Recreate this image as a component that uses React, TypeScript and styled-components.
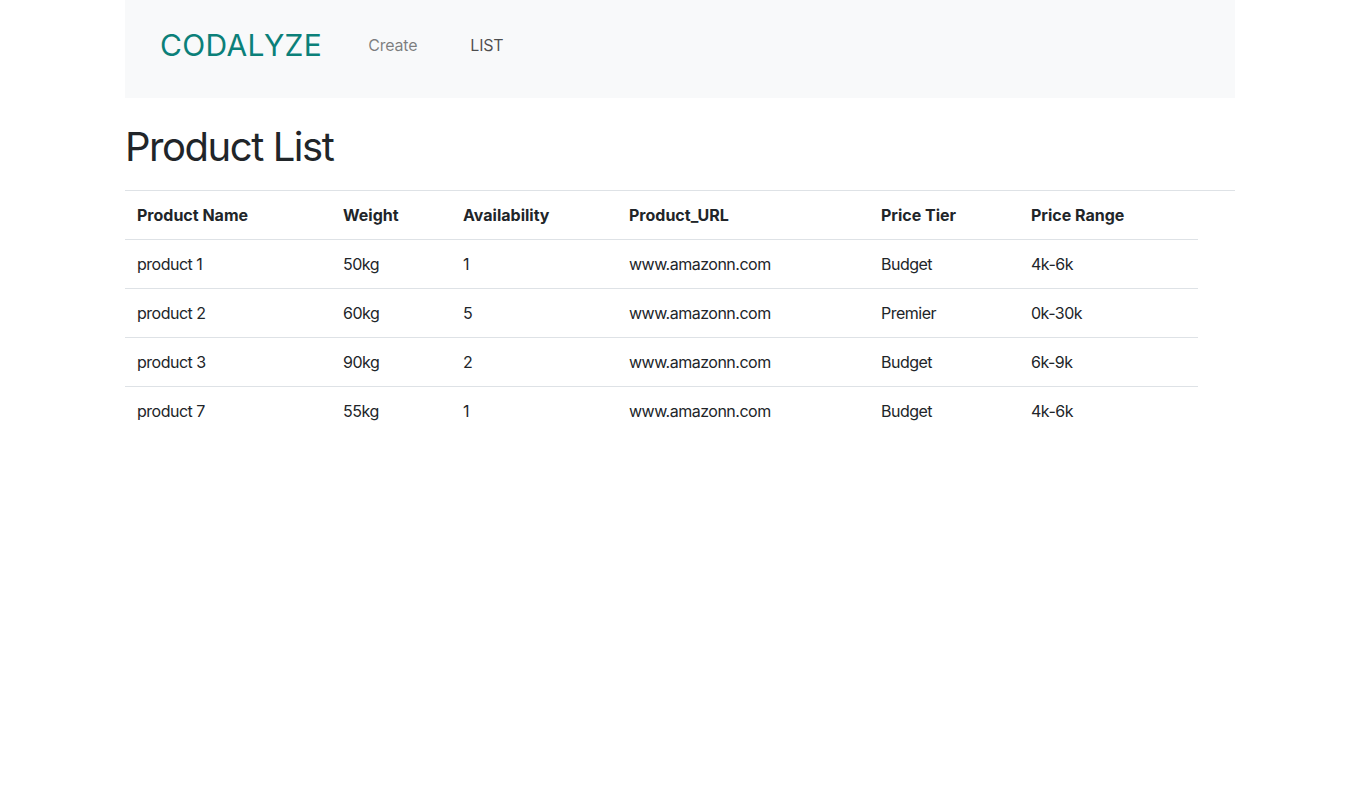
import React from 'react'
import styled, { createGlobalStyle } from 'styled-components'

const GlobalStyle = createGlobalStyle`
  * { box-sizing: border-box; }
  body {
    margin: 0;
    font-family: Inter, "Noto Sans", "Liberation Sans", sans-serif;
    font-size: 16px;
    line-height: 1.5;
    color: #212529;
    background: #fff;
  }
`

const products = [
  { name: 'product 1', weight: '50kg', availability: 1, url: 'www.amazonn.com', tier: 'Budget', range: '4k-6k' },
  { name: 'product 2', weight: '60kg', availability: 5, url: 'www.amazonn.com', tier: 'Premier', range: '0k-30k' },
  { name: 'product 3', weight: '90kg', availability: 2, url: 'www.amazonn.com', tier: 'Budget', range: '6k-9k' },
  { name: 'product 7', weight: '55kg', availability: 1, url: 'www.amazonn.com', tier: 'Budget', range: '4k-6k' },
]

const columns = [
  { label: 'Product Name', width: 206 },
  { label: 'Weight', width: 120 },
  { label: 'Availability', width: 166 },
  { label: 'Product_URL', width: 252 },
  { label: 'Price Tier', width: 150 },
  { label: 'Price Range', width: 179 },
]

const App: React.FC = () => {
  return (
    <>
      <GlobalStyle />
      <Container>
        <Navbar>
          <Brand href="#">CODALYZE</Brand>
          <NavLinks>
            <NavLink href="#">Create</NavLink>
            <NavLink href="#" $active>
              LIST
            </NavLink>
          </NavLinks>
        </Navbar>

        <Title>Product List</Title>

        <TableWrap>
          <Table>
            <colgroup>
              {columns.map((c) => (
                <col key={c.label} style={{ width: c.width }} />
              ))}
            </colgroup>
            <thead>
              <tr>
                {columns.map((c) => (
                  <Th key={c.label}>{c.label}</Th>
                ))}
              </tr>
            </thead>
            <tbody>
              {products.map((p) => (
                <tr key={p.name}>
                  <Td>{p.name}</Td>
                  <Td>{p.weight}</Td>
                  <Td>{p.availability}</Td>
                  <Td>{p.url}</Td>
                  <Td>{p.tier}</Td>
                  <Td>{p.range}</Td>
                </tr>
              ))}
            </tbody>
          </Table>
        </TableWrap>
      </Container>
    </>
  )
}

export default App

const Container = styled.div`
  width: 1110px;
  margin-left: calc(50% - 554px);
`

const Navbar = styled.nav`
  display: flex;
  align-items: center;
  height: 98px;
  padding: 0 35px 8px;
  background-color: #f8f9fa;
`

const Brand = styled.a`
  font-size: 30px;
  line-height: 1.2;
  color: #0b8079;
  text-decoration: none;
  margin-right: 46px;
  letter-spacing: 0.35px;
`

const NavLinks = styled.div`
  display: flex;
  gap: 53px;
`

const NavLink = styled.a<{ $active?: boolean }>`
  font-size: 16px;
  letter-spacing: -0.2px;
  text-decoration: none;
  color: ${({ $active }) => ($active ? 'rgba(0, 0, 0, 0.7)' : 'rgba(0, 0, 0, 0.5)')};
`

const Title = styled.h1`
  margin: 25px 0 19px;
  font-size: 40px;
  font-weight: 400;
  line-height: 1.2;
  letter-spacing: -1.45px;
`

const TableWrap = styled.div`
  border-top: 1px solid #dee2e6;
`

const Table = styled.table`
  width: 1073px;
  border-collapse: collapse;
  table-layout: fixed;
  tbody tr {
    border-top: 1px solid #dee2e6;
  }
`

const Th = styled.th`
  text-align: left;
  font-weight: 700;
  padding: 12px;
  height: 48px;
`

const Td = styled.td`
  padding: 12px;
  height: 48px;
  letter-spacing: -0.5px;
`
